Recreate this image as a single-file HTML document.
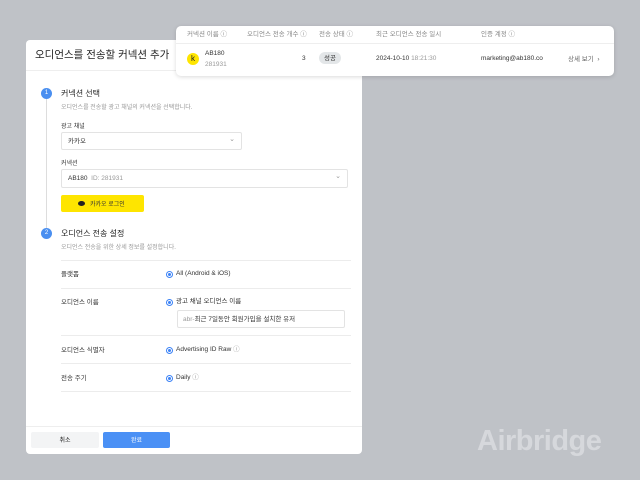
<html><head><style>
body{margin:0;width:640px;height:480px;background:#bfc2c7;font-family:"Liberation Sans","Noto Sans CJK KR",sans-serif;position:relative;overflow:hidden;color:#222;line-height:1}
.a{position:absolute}
.modal{left:26px;top:40px;width:336px;height:414px;background:#fff;border-radius:4px}
.card{left:176px;top:26px;width:438px;height:50px;background:#fff;border-radius:5px;box-shadow:0 1px 4px rgba(0,0,0,.15)}
.hd{font-size:6.5px;color:#888;top:6px}
.s{font-size:6.5px;color:#333;margin-top:1px}
.s .g,.s span{margin-top:0}
.g{color:#999}
.inp{background:#fff;border:1px solid #e3e3e3;border-radius:2px}
.rad{width:7px;height:7px;border-radius:50%;border:1px solid #3b82f6;box-sizing:border-box;background:#fff}
.rad::after{content:"";position:absolute;left:1px;top:1px;width:3px;height:3px;border-radius:50%;background:#3b82f6}
.line{height:1px;background:#ececec;left:35px;width:290px}
</style></head><body>
<div class="a modal">
 <div class="a" style="left:9px;top:10px;font-size:10.5px;color:#222">오디언스를 전송할 커넥션 추가</div>
 <div class="a" style="left:0;top:30px;width:336px;height:1px;background:#eee"></div>
 <div class="a" style="left:20px;top:58px;width:1px;height:133px;background:#ddd"></div>
 <div class="a" style="left:15px;top:48px;width:11px;height:11px;border-radius:50%;background:#4a8ff0;color:#fff;font-size:6px;text-align:center;line-height:11px">1</div>
 <div class="a" style="left:35px;top:50px;font-size:8px">커넥션 선택</div>
 <div class="a s g" style="left:35px;top:64px;font-size:6px">오디언스를 전송할 광고 채널의 커넥션을 선택합니다.</div>
 <div class="a s" style="left:35px;top:83px;font-size:6px">광고 채널</div>
 <div class="a inp" style="left:35px;top:92px;width:179px;height:16px"><span class="a s" style="left:6px;top:5px">카카오</span><span class="a g" style="right:6px;top:3px;font-size:7px">⌄</span></div>
 <div class="a s" style="left:35px;top:120px;font-size:6px">커넥션</div>
 <div class="a inp" style="left:35px;top:129px;width:285px;height:17px"><span class="a s" style="left:6px;top:5px">AB180 <span class="g">&nbsp;ID: 281931</span></span><span class="a g" style="right:6px;top:3px;font-size:7px">⌄</span></div>
 <div class="a" style="left:35px;top:155px;width:83px;height:17px;background:#fee500;border-radius:2px"><span class="a" style="left:17px;top:6px;width:7px;height:5px;border-radius:50%;background:#222"></span><span class="a s" style="left:29px;top:6px;font-size:6px">카카오 로그인</span></div>
 <div class="a" style="left:15px;top:188px;width:11px;height:11px;border-radius:50%;background:#4a8ff0;color:#fff;font-size:6px;text-align:center;line-height:11px">2</div>
 <div class="a" style="left:35px;top:190px;font-size:8px">오디언스 전송 설정</div>
 <div class="a s g" style="left:35px;top:204px;font-size:6px">오디언스 전송을 위한 상세 정보를 설정합니다.</div>
 <div class="a line" style="top:220px"></div>
 <div class="a s" style="left:35px;top:231px">플랫폼</div>
 <div class="a rad" style="left:140px;top:231px"></div><div class="a s" style="left:150px;top:230px">All (Android &amp; iOS)</div>
 <div class="a line" style="top:248px"></div>
 <div class="a s" style="left:35px;top:259px">오디언스 이름</div>
 <div class="a rad" style="left:140px;top:259px"></div><div class="a s" style="left:150px;top:258px">광고 채널 오디언스 이름</div>
 <div class="a inp" style="left:151px;top:270px;width:166px;height:16px"><span class="a s" style="left:5px;top:5px"><span class="g">abr-</span>최근 7일동안 회원가입을 설치한 유저</span></div>
 <div class="a line" style="top:295px"></div>
 <div class="a s" style="left:35px;top:307px">오디언스 식별자</div>
 <div class="a rad" style="left:140px;top:307px"></div><div class="a s" style="left:150px;top:306px">Advertising ID Raw <span class="g">ⓘ</span></div>
 <div class="a line" style="top:323px"></div>
 <div class="a s" style="left:35px;top:335px">전송 주기</div>
 <div class="a rad" style="left:140px;top:335px"></div><div class="a s" style="left:150px;top:334px">Daily <span class="g">ⓘ</span></div>
 <div class="a line" style="top:351px"></div>
 <div class="a" style="left:0;top:386px;width:336px;height:1px;background:#eee"></div>
 <div class="a" style="left:5px;top:392px;width:68px;height:16px;background:#f3f4f5;border-radius:2px;font-size:6px;text-align:center;line-height:18px">취소</div>
 <div class="a" style="left:77px;top:392px;width:67px;height:16px;background:#4a90f5;border-radius:2px;font-size:6px;color:#fff;text-align:center;line-height:18px">완료</div>
</div>
<div class="a card">
 <div class="a" style="left:0;top:17px;width:438px;height:1px;background:#eee"></div>
 <div class="a hd" style="left:11px">커넥션 이름 ⓘ</div>
 <div class="a hd" style="left:71px">오디언스 전송 개수 ⓘ</div>
 <div class="a hd" style="left:143px">전송 상태 ⓘ</div>
 <div class="a hd" style="left:200px">최근 오디언스 전송 일시</div>
 <div class="a hd" style="left:305px">인증 계정 ⓘ</div>
 <div class="a" style="left:11px;top:27px;width:12px;height:12px;border-radius:50%;background:#fee500;font-size:8px;text-align:center;line-height:12px">k</div>
 <div class="a s" style="left:29px;top:24px">AB180</div>
 <div class="a s g" style="left:29px;top:35px">281931</div>
 <div class="a s" style="left:126px;top:29px">3</div>
 <div class="a s" style="left:143px;top:26px;width:22px;height:12px;border-radius:6px;background:#e3e6e8;text-align:center;line-height:13px;margin-top:0">성공</div>
 <div class="a s" style="left:200px;top:29px">2024-10-10 <span class="g">18:21:30</span></div>
 <div class="a s" style="left:305px;top:29px">marketing@ab180.co</div>
 <div class="a s" style="left:392px;top:30px;color:#666">상세 보기 &nbsp;›</div>
</div>
<div class="a" style="left:477px;top:427px;font-size:29px;font-weight:bold;color:#d6d8dc;letter-spacing:-0.5px">Airbridge</div>
</body></html>
